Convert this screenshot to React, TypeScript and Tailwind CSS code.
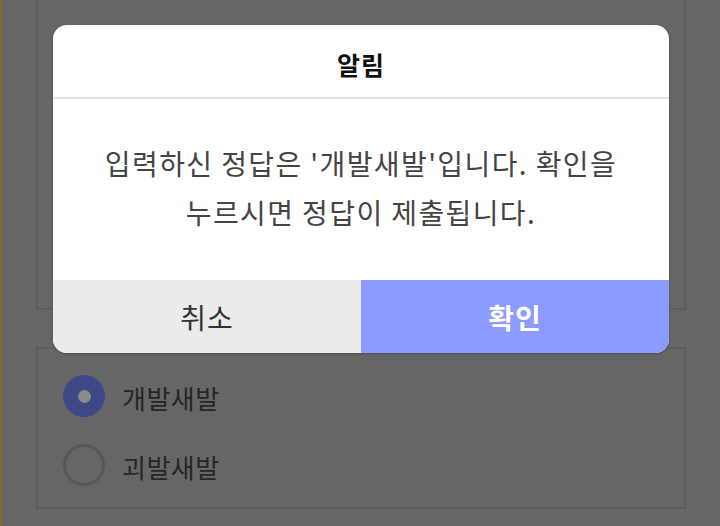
import React from 'react';

function Radio({ checked, label }: { checked?: boolean; label: string }) {
  return (
    <div className="flex items-center h-[42px]">
      {checked ? (
        <span className="flex items-center justify-center w-[42px] h-[42px] rounded-full bg-[#3f4886]">
          <span className="w-[13px] h-[13px] rounded-full bg-[#8a8a8a]" />
        </span>
      ) : (
        <span className="w-[42px] h-[42px] rounded-full border-[3px] border-[#585858]" />
      )}
      <span className="ml-[17px] mt-[3px] text-[26px] tracking-[0.5px] leading-none text-[#262626]">{label}</span>
    </div>
  );
}

export default function App() {
  return (
    <div className="relative w-[720px] h-[526px] overflow-hidden bg-[#666666] border-l-2 border-[#80682f] font-['Noto_Sans_CJK_KR','Noto_Sans',sans-serif]">
      {/* page behind the dim overlay */}
      <div className="flex flex-col pl-[34px]">
        <div className="w-[650px] h-[322px] -mt-[12px] border-2 border-[#5d5d5d]" />
        <div className="w-[650px] h-[162px] mt-[37px] border-2 border-[#5d5d5d] pl-[25px] pt-[26px] flex flex-col gap-[27px]">
          <Radio checked label="개발새발" />
          <Radio label="괴발새발" />
        </div>
      </div>

      {/* alert dialog */}
      <div className="absolute left-[51px] top-[25px] w-[616px] h-[328px] rounded-[14px] bg-white overflow-hidden flex flex-col shadow-[0_1px_3px_rgba(0,0,0,0.25)]">
        <div className="h-[72px] pt-[23px] text-center text-[25px] tracking-[1px] leading-[32px] font-bold text-[#111]">알림</div>
        <div className="h-[2px] bg-[#e2e2e2]" />
        <div className="flex-1 flex items-center justify-center text-center text-[28px] tracking-[1.4px] leading-[49px] text-[#444] pb-[4px]">
          <p>
            입력하신 정답은 '개발새발'입니다. 확인을
            <br />
            누르시면 정답이 제출됩니다.
          </p>
        </div>
        <div className="flex h-[73px]">
          <button className="flex-1 bg-[#ebebeb] text-[28px] tracking-[1px] text-[#333] leading-none">취소</button>
          <button className="flex-1 bg-[#8b9bff] text-[28px] tracking-[1px] font-bold text-white leading-none">확인</button>
        </div>
      </div>
    </div>
  );
}
